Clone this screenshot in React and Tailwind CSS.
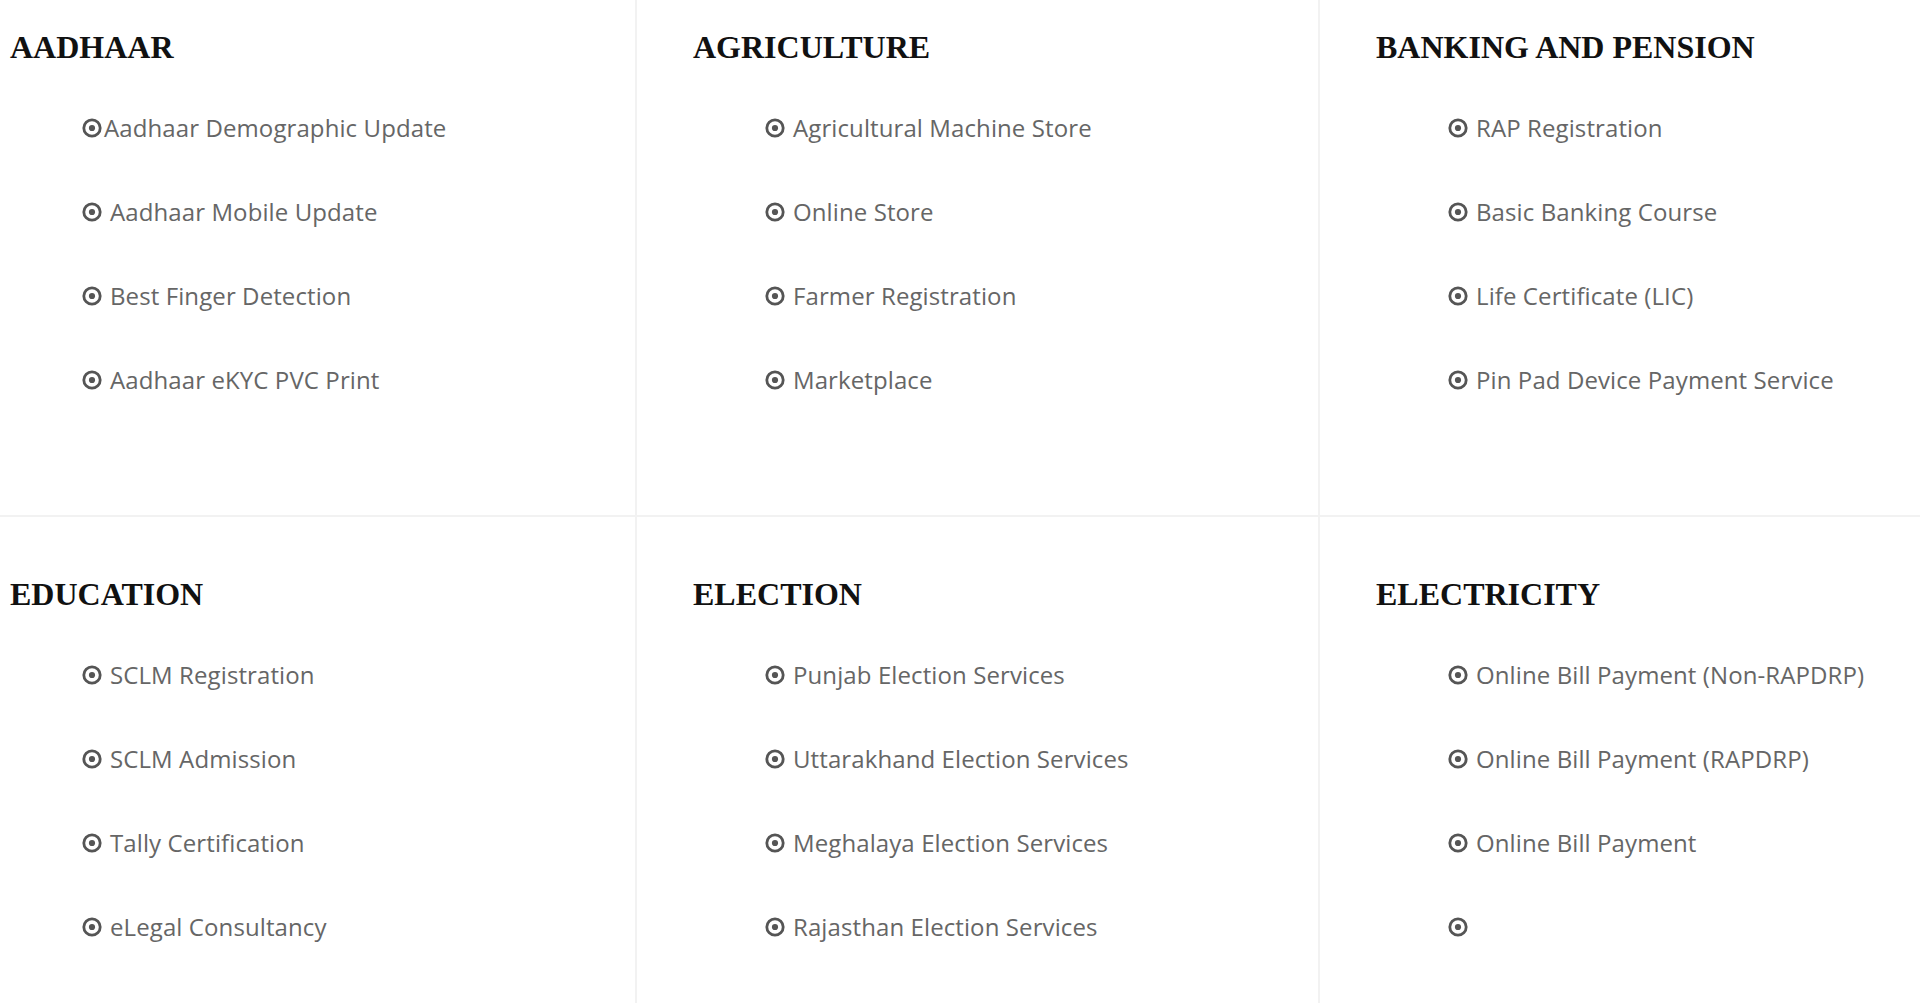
import React from "react";

const sections = [
  {
    title: "AADHAAR",
    items: ["Aadhaar Demographic Update", "Aadhaar Mobile Update", "Best Finger Detection", "Aadhaar eKYC PVC Print"],
    tight: true,
  },
  {
    title: "AGRICULTURE",
    items: ["Agricultural Machine Store", "Online Store", "Farmer Registration", "Marketplace"],
  },
  {
    title: "BANKING AND PENSION",
    items: ["RAP Registration", "Basic Banking Course", "Life Certificate (LIC)", "Pin Pad Device Payment Service"],
  },
  {
    title: "EDUCATION",
    items: ["SCLM Registration", "SCLM Admission", "Tally Certification", "eLegal Consultancy"],
  },
  {
    title: "ELECTION",
    items: ["Punjab Election Services", "Uttarakhand Election Services", "Meghalaya Election Services", "Rajasthan Election Services"],
  },
  {
    title: "ELECTRICITY",
    items: ["Online Bill Payment (Non-RAPDRP)", "Online Bill Payment (RAPDRP)", "Online Bill Payment", ""],
  },
];

function DotCircle() {
  return (
    <svg width="20" height="20" viewBox="0 0 20 20" className="shrink-0">
      <circle cx="10" cy="10" r="8.2" fill="none" stroke="#555555" strokeWidth="2.8" />
      <circle cx="10" cy="10" r="3.1" fill="#555555" />
    </svg>
  );
}

function Section({ title, items, tight, first, last }) {
  return (
    <div
      className={
        "h-[547px] border-b-2 border-[#f2f2f2] pt-[61px] " +
        (first ? "pl-[10px] " : "pl-[56px] ") +
        (last ? "" : "border-r-2")
      }
    >
      <h3
        className="text-[32px] leading-[32px] font-bold text-[#111]"
        style={{ fontFamily: '"Liberation Serif", serif' }}
      >
        {title}
      </h3>
      <ul className="mt-[23px] ml-[72px]">
        {items.map((item, i) => (
          <li
            key={i}
            className="h-[84px] flex items-center text-[24px] tracking-[0.1px] text-[#666666]"
            style={{ fontFamily: '"Open Sans", "Liberation Sans", sans-serif' }}
          >
            <DotCircle />
            <span className={tight && i === 0 ? "ml-[2px]" : "ml-[8px]"}>{item}</span>
          </li>
        ))}
      </ul>
    </div>
  );
}

export default function App() {
  return (
    <div className="bg-white w-[1920px] h-[1003px] overflow-hidden">
      <div className="-mt-[30px] grid grid-cols-[637px_683px_1fr]">
        {sections.map((s, i) => (
          <Section key={s.title} {...s} first={i % 3 === 0} last={i % 3 === 2} />
        ))}
      </div>
    </div>
  );
}
